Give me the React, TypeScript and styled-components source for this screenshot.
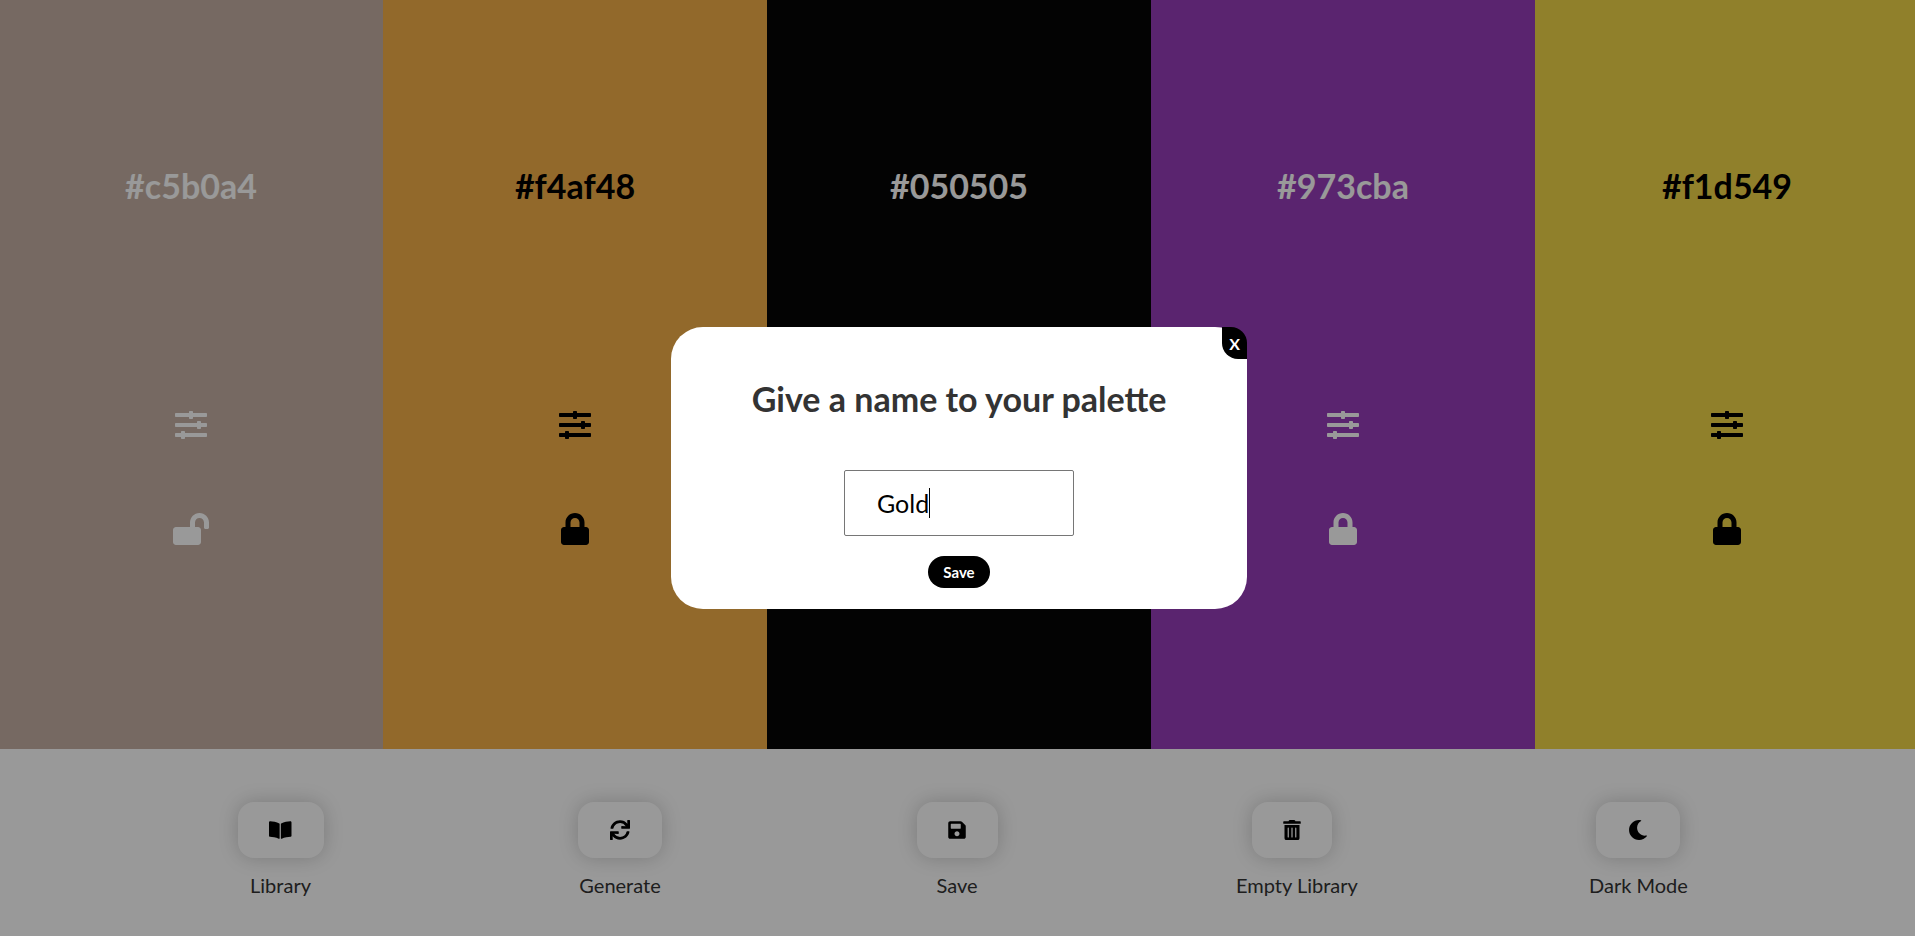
import React, { useLayoutEffect, useRef, useState } from "react";
import styled, { createGlobalStyle } from "styled-components";
import {
  FaBookOpen,
  FaLock,
  FaLockOpen,
  FaMoon,
  FaSave,
  FaSlidersH,
  FaSync,
  FaTrashAlt,
} from "react-icons/fa";

const GlobalStyle = createGlobalStyle`
  *, *::before, *::after { box-sizing: border-box; }
  body { margin: 0; font-family: Muli, Lato, sans-serif; color: #333; background: #fff; }
  h2, p { margin: 0; }
  button, input { font-family: inherit; }
  button { border: none; cursor: pointer; }
  button svg { flex: none; }
  /* Wide glyphs keep the full icon height. */
  svg[viewBox^="0 0 576"] { width: 1.125em; }
`;

const Page = styled.div`
  display: grid;
  grid-template-rows: 4fr 1fr;
  min-height: 100vh;
  overflow: hidden;
`;

const Colors = styled.main`
  display: grid;
  grid-template-columns: repeat(5, 1fr);
  margin: 0 -4px 0 -1px;
`;

const Swatch = styled.section<{ $color: string; $ink: string }>`
  display: flex;
  flex-direction: column;
  align-items: center;
  padding-top: 166px;
  color: ${(p) => p.$ink};
  background: ${(p) => p.$color};
`;

const Hex = styled.h2`
  font-size: 34px;
  line-height: 40px;
  font-weight: 700;
  margin-bottom: 187px;
`;

const SwatchControl = styled.button`
  display: flex;
  padding: 16px;
  margin-bottom: 40px;
  color: inherit;
  background: none;
  font-size: 32px;
`;

const Toolbar = styled.footer`
  display: flex;
  justify-content: space-evenly;
  align-items: center;
  margin: 0 -4px 0 -1px;
`;

const Tool = styled.div`
  display: flex;
  flex-direction: column;
`;

const ToolButton = styled.button<{ $width: number }>`
  display: flex;
  align-self: flex-start;
  justify-content: center;
  width: ${(p) => p.$width}px;
  margin: 16px 16px 14px;
  padding: 18px 0;
  border-radius: 16px;
  color: #000;
  background: #fff;
  font-size: 20px;
  box-shadow: 0 0 20px rgba(0, 0, 0, 0.2);
`;

const ToolLabel = styled.p`
  font-size: 20px;
  line-height: 26px;
  font-weight: 400;
  text-align: center;
`;

const Overlay = styled.div`
  position: fixed;
  inset: 0 -4px 0 -1px;
  display: flex;
  align-items: center;
  justify-content: center;
  background: rgba(0, 0, 0, 0.4);
`;

const Dialog = styled.form`
  position: relative;
  display: flex;
  flex-direction: column;
  align-items: center;
  width: 30%;
  padding: 52px 20px 21px;
  border-radius: 32px;
  background: #fff;
`;

const Title = styled.h2`
  font-size: 34px;
  line-height: 40px;
  font-weight: 700;
  margin-bottom: 51px;
`;

const Field = styled.div`
  position: relative;
  margin-bottom: 20px;
`;

const NameInput = styled.input`
  display: block;
  width: 230px;
  height: 66px;
  padding: 0 32px;
  border: 1px solid #767676;
  border-radius: 2px;
  outline: none;
  color: #000;
  caret-color: transparent;
  font-size: 25px;
  font-weight: 400;
`;

const Caret = styled.span`
  position: absolute;
  top: 18px;
  width: 1px;
  height: 30px;
  background: #000;
  pointer-events: none;
`;

const SaveButton = styled.button`
  width: 62px;
  height: 32px;
  padding: 0;
  border-radius: 16px;
  color: #fff;
  background: #000;
  font-size: 15px;
  font-weight: 700;
`;

const CloseButton = styled.button`
  position: absolute;
  top: 0;
  right: 0;
  width: 25px;
  height: 32px;
  padding: 0;
  border-radius: 0 16px;
  color: #fff;
  background: #000;
  font-size: 16px;
  font-weight: 700;
`;

const swatches = [
  { hex: "#c5b0a4", ink: "#fff", locked: false },
  { hex: "#f4af48", ink: "#000", locked: true },
  { hex: "#050505", ink: "#fff", locked: true },
  { hex: "#973cba", ink: "#fff", locked: true },
  { hex: "#f1d549", ink: "#000", locked: true },
];

const tools = [
  { label: "Library", Icon: FaBookOpen, width: 86 },
  { label: "Generate", Icon: FaSync, width: 84 },
  { label: "Save", Icon: FaSave, width: 81 },
  { label: "Empty Library", Icon: FaTrashAlt, width: 80 },
  { label: "Dark Mode", Icon: FaMoon, width: 84 },
];

function NameField() {
  const [name, setName] = useState("Gold");
  const [caretX, setCaretX] = useState(0);
  const input = useRef<HTMLInputElement>(null);

  // Places the caret after the last character of the name.
  useLayoutEffect(() => {
    const context = document.createElement("canvas").getContext("2d");
    if (!context || !input.current) return;
    const style = getComputedStyle(input.current);
    context.font = `${style.fontWeight} ${style.fontSize} ${style.fontFamily}`;
    setCaretX(Math.round(33 + context.measureText(name).width));
  }, [name]);

  return (
    <Field>
      <NameInput
        ref={input}
        aria-labelledby="dialog-title"
        autoFocus
        value={name}
        onChange={(e) => setName(e.target.value)}
      />
      <Caret style={{ left: caretX }} />
    </Field>
  );
}

export default function App() {
  return (
    <>
      <GlobalStyle />
      <Page>
        <Colors>
          {swatches.map(({ hex, ink, locked }) => (
            <Swatch key={hex} $color={hex} $ink={ink}>
              <Hex>{hex}</Hex>
              <SwatchControl aria-label="Adjust">
                <FaSlidersH />
              </SwatchControl>
              <SwatchControl aria-label={locked ? "Unlock" : "Lock"}>
                {locked ? <FaLock /> : <FaLockOpen />}
              </SwatchControl>
            </Swatch>
          ))}
        </Colors>
        <Toolbar>
          {tools.map(({ label, Icon, width }) => (
            <Tool key={label}>
              <ToolButton aria-label={label} $width={width}>
                <Icon />
              </ToolButton>
              <ToolLabel>{label}</ToolLabel>
            </Tool>
          ))}
        </Toolbar>
      </Page>
      <Overlay>
        <Dialog role="dialog" aria-labelledby="dialog-title" onSubmit={(e) => e.preventDefault()}>
          <CloseButton type="button" aria-label="Close">
            X
          </CloseButton>
          <Title id="dialog-title">Give a name to your palette</Title>
          <NameField />
          <SaveButton type="submit">Save</SaveButton>
        </Dialog>
      </Overlay>
    </>
  );
}
